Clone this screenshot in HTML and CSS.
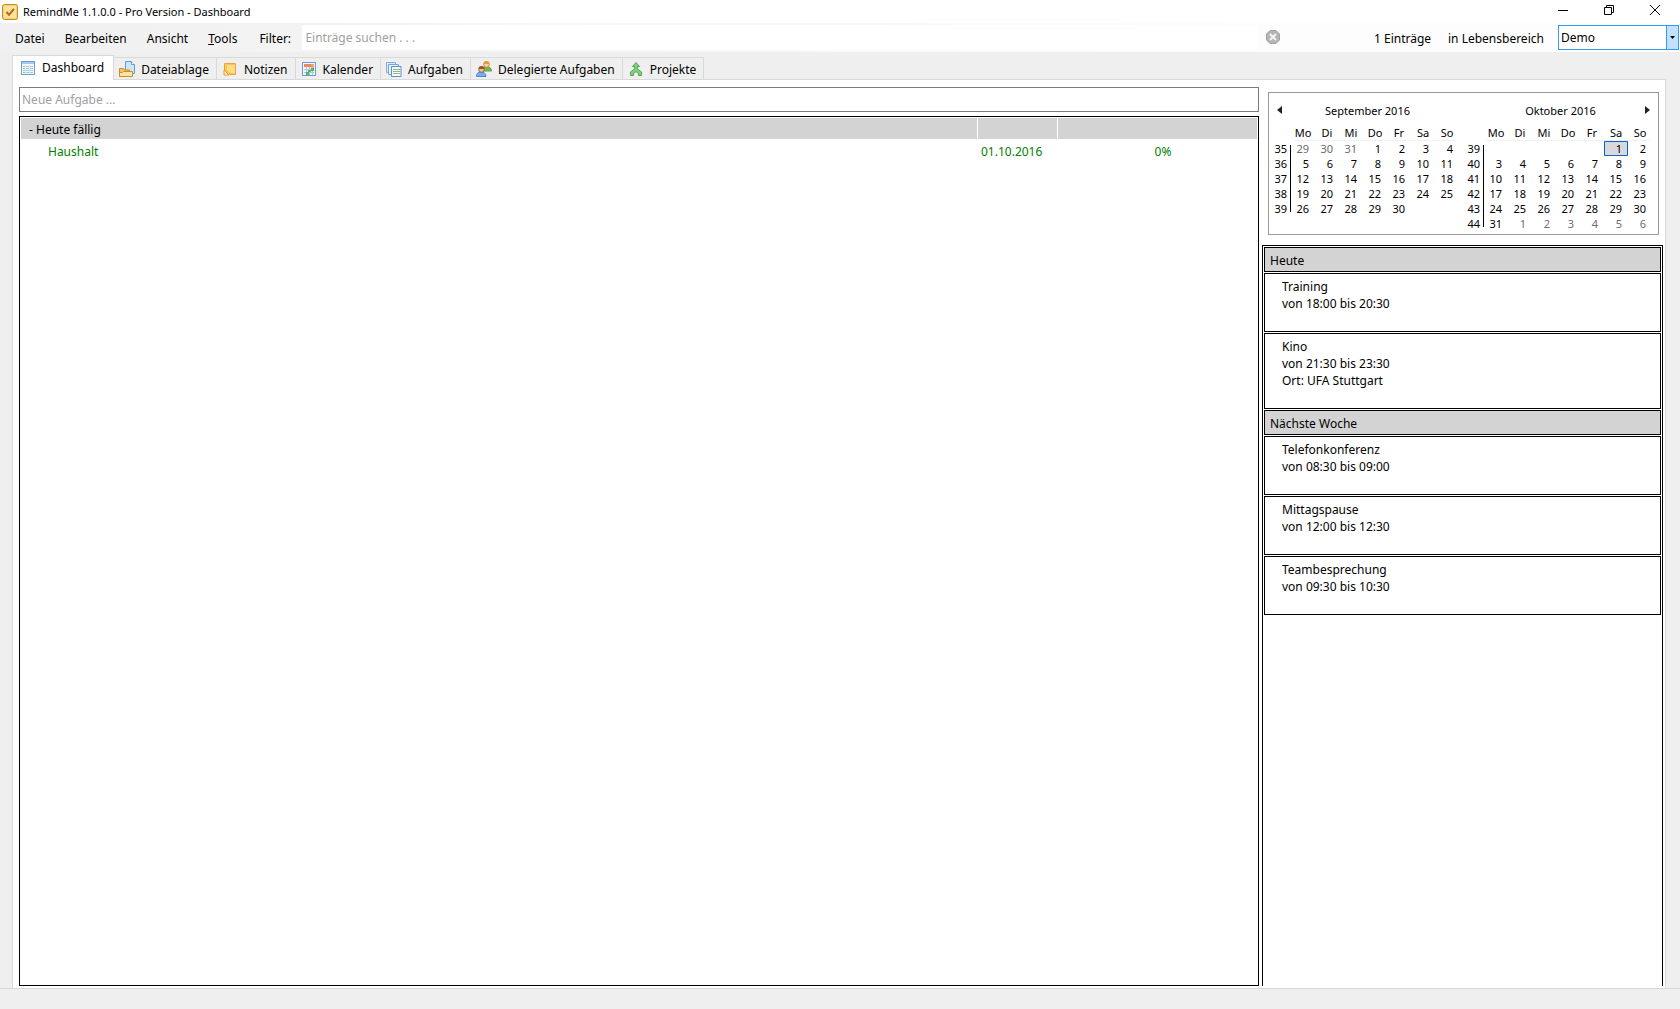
FILE: index.html
```html
<!DOCTYPE html>
<html lang="de">
<head>
<meta charset="utf-8">
<title>RemindMe 1.1.0.0 - Pro Version - Dashboard</title>
<link rel="stylesheet" href="styles.css">
</head>
<body>
<header class="titlebar">
  <svg class="app-icon" width="16" height="16" viewBox="0 0 16 16" aria-hidden="true">
    <rect x="0.5" y="0.5" width="15" height="15" rx="2" fill="#f7cf6b" stroke="#c98a2b"/>
    <rect x="2" y="2" width="12" height="12" rx="1" fill="#fbe39b"/>
    <path d="M4.500 8l2.500 2.800 5-6" fill="none" stroke="#b5651d" stroke-width="2"/>
  </svg>
  <h1 class="title">RemindMe 1.1.0.0 - Pro Version - Dashboard</h1>
  <div class="window-buttons">
    <button type="button" aria-label="Minimieren"><svg width="10" height="10" viewBox="0 0 10 10"><path d="M0 5.500h10" stroke="#000"/></svg></button>
    <button type="button" aria-label="Wiederherstellen"><svg width="10" height="10" viewBox="0 0 10 10" fill="none" stroke="#000"><path d="M0.500 2.500h7v7h-7zM2.500 2.500v-2h7v7h-2"/></svg></button>
    <button type="button" aria-label="Schließen"><svg width="10" height="10" viewBox="0 0 10 10"><path d="M0 0l10 10M10 0l-10 10" stroke="#000"/></svg></button>
  </div>
</header>

<div class="menubar">
  <nav class="menus">
    <button type="button">Datei</button>
    <button type="button">Bearbeiten</button>
    <button type="button">Ansicht</button>
    <button type="button"><u>T</u>ools</button>
  </nav>
  <label class="filter-label" for="filter">Filter:</label>
  <input class="filter" id="filter" type="text" placeholder="Einträge suchen . . .">
  <button class="clear" type="button" aria-label="Filter löschen">
    <svg width="14" height="14" viewBox="0 0 14 14"><path d="M4 .5h6l3.500 3.500v6l-3.500 3.500h-6l-3.500-3.500v-6z" fill="#b4b4b4" stroke="#a2a2a2"/><path d="M4 4l6 6M10 4l-6 6" stroke="#f4f4f4" stroke-width="2"/></svg>
  </button>
  <span class="count">1 Einträge</span>
  <label class="area-label" for="area">in Lebensbereich</label>
  <select class="area" id="area"><option>Demo</option></select>
</div>

<div class="tabs" role="tablist">
  <button type="button" class="tab active" role="tab" aria-selected="true">
    <svg width="16" height="16" viewBox="0 0 16 16"><rect x="1.500" y="1.500" width="13" height="13" fill="#f3f8fe" stroke="#6d9bd4"/><path d="M2 3h12" stroke="#a8c8ee" stroke-width="2"/><path d="M3 6.500h2M3 8.500h2M3 10.500h2M3 12.500h2" stroke="#9fc48a"/><path d="M6 6.500h7M6 8.500h7M6 10.500h7M6 12.500h7" stroke="#a5c3e6"/><path d="M5.500 5v9M9.500 5v9" stroke="#dbe8f7"/></svg>
    Dashboard</button>
  <button type="button" class="tab" role="tab" aria-selected="false">
    <svg width="16" height="16" viewBox="0 0 16 16"><path d="M6.500 9v-8.500h6l3 3v9h-5" fill="#cfe6f9" stroke="#5f9ed6"/><path d="M12.500.5v3h3" fill="#fff" stroke="#5f9ed6"/><path d="M.5 15.500v-8h4l1 1.500h5v2" fill="#f3c766" stroke="#cf8a2c"/><path d="M.5 15.500v-4h3l1-1h9v5z" fill="#fde6a0" stroke="#cf8a2c"/></svg>
    Dateiablage</button>
  <button type="button" class="tab" role="tab" aria-selected="false">
    <svg width="16" height="16" viewBox="0 0 16 16"><path d="M2.500 2.500h11v11h-11z" fill="#fbc653" stroke="#e9a640"/><path d="M5 4h8v8h-4l-4-3z" fill="#fddd8a"/><path d="M2 9l5 5h-5z" fill="#fff3d0" stroke="#e39a2d"/></svg>
    Notizen</button>
  <button type="button" class="tab" role="tab" aria-selected="false">
    <svg width="16" height="16" viewBox="0 0 16 16"><rect x="1.500" y="1.500" width="13" height="13" fill="#eef5fd" stroke="#6d9bd4"/><path d="M3 4.500h10" stroke="#f4845a" stroke-width="3"/><path d="M10 3h3v4h-3z" fill="#f7a35c"/><path d="M3 8.500h10M3 11.500h10M5.500 6v8M8.500 6v8M11.500 6v8" stroke="#a6c8e8"/><path d="M10 7h3v3h-3zM7 9h3v2h-3zM5 11h3v3h-3z" fill="#58b64c"/></svg>
    Kalender</button>
  <button type="button" class="tab" role="tab" aria-selected="false">
    <svg width="16" height="16" viewBox="0 0 16 16"><path d="M.5 1.500h9v10h-9z" fill="#dcebfa" stroke="#82aedd"/><path d="M2.500 3.500h10v10h-10z" fill="#e8f2fc" stroke="#75a5d8"/><path d="M5.500 5.500h9.500v10h-9.500z" fill="#f5faff" stroke="#5b8fd0"/><path d="M7 8.500h7M7 10.500h7M7 12.500h7" stroke="#8db98a"/></svg>
    Aufgaben</button>
  <button type="button" class="tab" role="tab" aria-selected="false">
    <svg width="16" height="16" viewBox="0 0 16 16"><path d="M7 10c0-3 1.500-4 4-4s4.500 1 4.500 4z" fill="#6dbb52" stroke="#5ba348"/><circle cx="10.500" cy="3.500" r="2.800" fill="#f8cf91" stroke="#c98b35"/><path d="M7.500 3a3 3 0 0 1 6 0z" fill="#dda037"/><path d="M.5 15.500c0-3 1.500-4.500 4.500-4.500s5 1.500 5 4.500z" fill="#6fb2f2" stroke="#4a86d4"/><circle cx="5.500" cy="8.500" r="2.800" fill="#f5bf8d" stroke="#9c6239"/><path d="M2.500 8a3 3 0 0 1 6 0z" fill="#8d573b"/></svg>
    Delegierte Aufgaben</button>
  <button type="button" class="tab" role="tab" aria-selected="false">
    <svg width="16" height="16" viewBox="0 0 16 16"><path d="M8 1.500l3.500 4h-2v2.500l4 3v3.500h-3v-2l-2.500-2-2.500 2v2h-3v-3.500l4-3v-2.500h-2z" fill="#83cf7c" stroke="#4fa552"/></svg>
    Projekte</button>
</div>

<main class="page">
  <section class="tasks">
    <input class="new-task" type="text" aria-label="Neue Aufgabe" placeholder="Neue Aufgabe ...">
    <div class="task-list">
      <table class="task-table">
        <colgroup><col><col class="col-date"><col class="col-progress"></colgroup>
        <thead><tr><th>- Heute fällig</th><th></th><th></th></tr></thead>
        <tbody><tr><td>Haushalt</td><td>01.10.2016</td><td>0%</td></tr></tbody>
      </table>
    </div>
  </section>

  <aside class="side">
    <div class="calendar">
      <button type="button" class="prev" aria-label="Vorheriger Monat"><svg width="5" height="8" viewBox="0 0 5 8"><path d="M5 0v8l-5-4z" fill="#222"/></svg></button>
      <button type="button" class="next" aria-label="Nächster Monat"><svg width="5" height="8" viewBox="0 0 5 8"><path d="M0 0v8l5-4z" fill="#222"/></svg></button>
      <table class="month">
        <caption>September 2016</caption>
        <thead><tr><th class="week"></th><th>Mo</th><th>Di</th><th>Mi</th><th>Do</th><th>Fr</th><th>Sa</th><th>So</th></tr></thead>
        <tbody>
          <tr><th class="week">35</th><td class="other">29</td><td class="other">30</td><td class="other">31</td><td>1</td><td>2</td><td>3</td><td>4</td></tr>
          <tr><th class="week">36</th><td>5</td><td>6</td><td>7</td><td>8</td><td>9</td><td>10</td><td>11</td></tr>
          <tr><th class="week">37</th><td>12</td><td>13</td><td>14</td><td>15</td><td>16</td><td>17</td><td>18</td></tr>
          <tr><th class="week">38</th><td>19</td><td>20</td><td>21</td><td>22</td><td>23</td><td>24</td><td>25</td></tr>
          <tr><th class="week">39</th><td>26</td><td>27</td><td>28</td><td>29</td><td>30</td><td></td><td></td></tr>
        </tbody>
      </table>
      <table class="month">
        <caption>Oktober 2016</caption>
        <thead><tr><th class="week"></th><th>Mo</th><th>Di</th><th>Mi</th><th>Do</th><th>Fr</th><th>Sa</th><th>So</th></tr></thead>
        <tbody>
          <tr><th class="week">39</th><td></td><td></td><td></td><td></td><td></td><td class="today">1</td><td>2</td></tr>
          <tr><th class="week">40</th><td>3</td><td>4</td><td>5</td><td>6</td><td>7</td><td>8</td><td>9</td></tr>
          <tr><th class="week">41</th><td>10</td><td>11</td><td>12</td><td>13</td><td>14</td><td>15</td><td>16</td></tr>
          <tr><th class="week">42</th><td>17</td><td>18</td><td>19</td><td>20</td><td>21</td><td>22</td><td>23</td></tr>
          <tr><th class="week">43</th><td>24</td><td>25</td><td>26</td><td>27</td><td>28</td><td>29</td><td>30</td></tr>
          <tr><th class="week">44</th><td>31</td><td class="other">1</td><td class="other">2</td><td class="other">3</td><td class="other">4</td><td class="other">5</td><td class="other">6</td></tr>
        </tbody>
      </table>
    </div>

    <div class="agenda">
      <h2 class="agenda-head">Heute</h2>
      <div class="entry"><p>Training</p><p>von 18:00 bis 20:30</p></div>
      <div class="entry"><p>Kino</p><p>von 21:30 bis 23:30</p><p>Ort: UFA Stuttgart</p></div>
      <h2 class="agenda-head">Nächste Woche</h2>
      <div class="entry"><p>Telefonkonferenz</p><p>von 08:30 bis 09:00</p></div>
      <div class="entry"><p>Mittagspause</p><p>von 12:00 bis 12:30</p></div>
      <div class="entry"><p>Teambesprechung</p><p>von 09:30 bis 10:30</p></div>
    </div>
  </aside>
</main>

<footer class="statusbar"></footer>
</body>
</html>
```
FILE: styles.css
```css
* { box-sizing: border-box; }

body {
  margin: 0;
  min-height: 100vh;
  display: flex;
  flex-direction: column;
  background: #efefef;
  color: #000;
  font: 12px/17px "Noto Sans", "Open Sans", sans-serif;
}

button, input, select { font: inherit; color: inherit; }
button { border: 0; padding: 0; background: none; }
svg { display: block; flex: none; }
h1, h2, p { margin: 0; font: inherit; }
input::placeholder { color: #a0a0a0; opacity: 1; }

/* Title bar */
.titlebar {
  display: flex;
  align-items: center;
  height: 23px;
  padding-left: 2px;
  gap: 5px;
  background: #fff;
}
.title { flex: 1; font-size: 11px; }
.window-buttons {
  display: flex;
  align-self: flex-start;
  padding-right: 2px;
}
.window-buttons button {
  display: flex;
  align-items: center;
  justify-content: center;
  width: 46px;
  height: 20px;
}

/* Menu bar */
.menubar {
  display: flex;
  align-items: center;
  height: 29px;
  padding: 0 1px 1px 15px;
  background: linear-gradient(to right, #f0f0f0, #fdfdfd 75%);
}
.menus { display: flex; gap: 20px; }
.menus, .filter-label, .count, .area-label { padding-top: 2px; }
.filter-label { width: 43px; margin-left: 22px; }
.filter {
  flex: 1;
  min-width: 0;
  height: 25px;
  border: 0;
  padding: 0 3px;
  background: #fff;
}
.clear { margin: 0 94px 0 8px; }
.count { width: 74px; }
.area-label { width: 110px; }
.area {
  appearance: none;
  width: 121px;
  height: 25px;
  border: 1px solid #3399ff;
  border-radius: 0;
  padding: 0 14px 0 2px;
  background:
    url("data:image/svg+xml,%3Csvg xmlns='http://www.w3.org/2000/svg' width='12' height='23'%3E%3Cpath d='M0 0h12v23H0z' fill='%23c2e0ff'/%3E%3Cpath d='M0 0h1v23H0z' fill='%233399ff'/%3E%3Cpath d='M4 10h5l-2.500 3z'/%3E%3C/svg%3E") right / 12px 23px no-repeat,
    #fff;
}

/* Tabs */
.tabs {
  display: flex;
  align-items: flex-end;
  padding: 3px 12px 0;
}
.tab {
  display: flex;
  align-items: center;
  gap: 6px;
  height: 22px;
  padding: 1px 7px 0 5px;
  border: 1px solid #d9d9d9;
  border-width: 1px 1px 0 0;
}
.tab.active {
  height: 25px;
  margin-bottom: -1px;
  padding: 0 9px 1px 7px;
  border-left-width: 1px;
  background: #fff;
  position: relative;
}

/* Page */
.page {
  flex: 1;
  display: flex;
  gap: 3px;
  margin: 0 14px 0 12px;
  padding: 7px 2px 2px 6px;
  border: 1px solid #d9d9d9;
  border-bottom: 0;
  background: #fff;
}
.tasks {
  flex: 1;
  display: flex;
  flex-direction: column;
  gap: 4px;
}
.new-task {
  height: 25px;
  border: 1px solid #7a7a7a;
  padding: 0 2px;
}
.task-list {
  flex: 1;
  padding: 1px;
  border: 1px solid #000;
}
.task-table {
  width: 100%;
  table-layout: fixed;
  border-spacing: 0;
}
.col-date { width: 80px; }
.col-progress { width: 200px; }
.task-table th {
  height: 21px;
  padding: 2px 8px 0;
  background: #d3d3d3;
  font-weight: normal;
  text-align: left;
}
.task-table th + th { border-left: 1px solid #fff; }
.task-table td {
  height: 24px;
  padding: 0 4px;
  color: #008000;
}
.task-table td:first-child { padding-left: 27px; }
.task-table td:last-child { padding-left: 16px; text-align: center; }

/* Side column */
.side {
  width: 401px;
  display: flex;
  flex-direction: column;
  gap: 10px;
  padding-top: 5px;
}
.calendar {
  position: relative;
  display: flex;
  align-items: flex-start;
  gap: 4px;
  height: 143px;
  margin: 0 4px 0 6px;
  padding: 8px 5px 0 1px;
  border: 1px solid #999;
  font-size: 11px;
  line-height: 15px;
}
.prev, .next { position: absolute; top: 13px; }
.prev { left: 8px; }
.next { right: 8px; }
.month {
  width: 189px;
  table-layout: fixed;
  border-spacing: 0;
}
.month caption { height: 24px; padding: 2px 0 0 6px; }
.month th, .month td {
  width: 24px;
  height: 15px;
  padding: 0;
  font-weight: normal;
}
.month .week { width: 21px; padding-right: 4px; text-align: right; }
.month td { padding-right: 6px; text-align: right; }
.month thead { background: linear-gradient(#f0f0f0, #f0f0f0) 24px 100% / 162px 1px no-repeat; }
.month thead th { height: 16px; padding-bottom: 1px; }
.month tbody { background: linear-gradient(#000, #000) 20px 4px / 1px calc(100% - 8px) no-repeat; }
.month .other { color: #6d6d6d; }
.month .today {
  background: #d9d9d9;
  box-shadow: inset 0 0 0 1px #0066cc;
  border-radius: 1px;
}

/* Agenda */
.agenda {
  flex: 1;
  display: flex;
  flex-direction: column;
  gap: 1px;
  padding: 1px;
  border: 1px solid #000;
  border-bottom: 0;
}
.agenda-head {
  height: 25px;
  padding: 4px 5px;
  border: 1px solid #000;
  background: #d3d3d3;
}
.entry {
  padding: 4px 17px 19px;
  border: 1px solid #000;
}

.statusbar {
  height: 21px;
  border-top: 1px solid #d9d9d9;
}
```
